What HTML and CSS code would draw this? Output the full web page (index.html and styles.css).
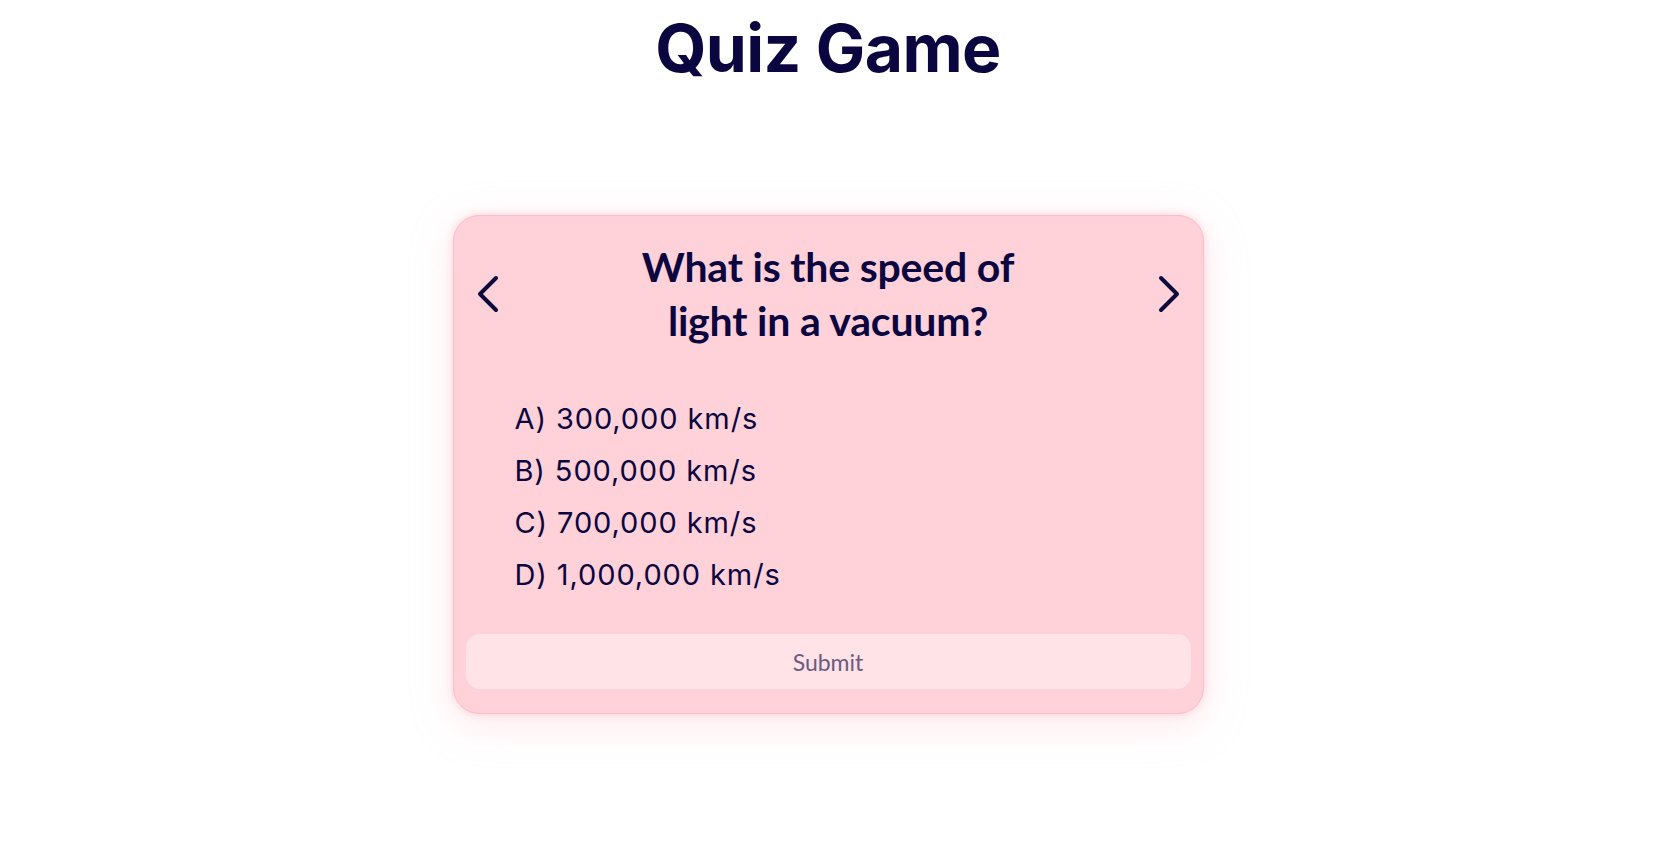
FILE: index.html
```html
<!DOCTYPE html>
<html lang="en">
<head>
<meta charset="utf-8">
<title>Quiz Game</title>
<link rel="stylesheet" href="styles.css">
</head>
<body>
  <h1 class="title">Quiz Game</h1>
  <main class="stage">
    <section class="card">
      <div class="card-head">
        <button class="nav-btn" aria-label="Previous question">
          <svg width="20" height="36" viewBox="0 0 20 36"><path d="M18 2 L2 18 L18 34" /></svg>
        </button>
        <h2 class="question">What is the speed of light in a vacuum?</h2>
        <button class="nav-btn" aria-label="Next question">
          <svg width="20" height="36" viewBox="0 0 20 36"><path d="M2 2 L18 18 L2 34" /></svg>
        </button>
      </div>
      <ul class="options">
        <li class="option"><span class="opt-key">A)</span><span class="opt-text">300,000 km/s</span></li>
        <li class="option"><span class="opt-key">B)</span><span class="opt-text">500,000 km/s</span></li>
        <li class="option"><span class="opt-key">C)</span><span class="opt-text">700,000 km/s</span></li>
        <li class="option"><span class="opt-key">D)</span><span class="opt-text">1,000,000 km/s</span></li>
      </ul>
      <button class="submit">Submit</button>
    </section>
  </main>
</body>
</html>
```
FILE: styles.css
```css
* { box-sizing: border-box; }

html { background: #ffffff; }

body {
  margin: 0;
  min-height: 860px;
  background: #ffffff;
  color: #0d0a3e;
  font-family: "Lato", "Noto Sans", sans-serif;
}

.title {
  margin: 8px 0 0;
  text-align: center;
  font-family: "Inter", "Noto Sans", sans-serif;
  font-weight: 700;
  font-size: 66px;
  line-height: 80px;
  letter-spacing: -0.6px;
  color: #0c0640;
}

.stage {
  display: flex;
  justify-content: center;
  padding: 127px 0 80px;
}

.card {
  width: 751px;
  background: #ffd1d9;
  border: 1px solid #ffbcc8;
  border-radius: 26px;
  padding: 24px 12px 24px;
  box-shadow: 0 0 10px rgba(255, 175, 190, 0.45), 0 10px 40px rgba(255, 190, 200, 0.35);
}

.card-head {
  display: flex;
  align-items: center;
  justify-content: space-between;
  padding: 0 12px 0 12px;
}

.nav-btn {
  border: 0;
  background: none;
  padding: 0;
  width: 20px;
  height: 36px;
  cursor: pointer;
  display: flex;
}

.nav-btn svg { overflow: visible; }
.nav-btn path {
  fill: none;
  stroke: #0d0a3e;
  stroke-width: 4;
  stroke-linecap: round;
  stroke-linejoin: round;
}

.question {
  margin: 0;
  max-width: 400px;
  text-align: center;
  font-family: "Lato", "Noto Sans", sans-serif;
  font-weight: 700;
  font-size: 41px;
  line-height: 54px;
  letter-spacing: -0.2px;
  color: #0c0640;
}

.options {
  list-style: none;
  margin: 45px 0 0;
  padding: 0 0 0 49px;
}

.option {
  display: flex;
  gap: 9px;
  font-family: "Inter", "Noto Sans", sans-serif;
  font-weight: 400;
  font-size: 29px;
  line-height: 52px;
  letter-spacing: 0.9px;
  color: #0c0640;
}

.submit {
  display: block;
  width: 100%;
  height: 55px;
  margin-top: 33px;
  border: 0;
  border-radius: 14px;
  background: #ffe3e7;
  color: #6d5a80;
  font-family: "Lato", "Noto Sans", sans-serif;
  font-size: 23px;
  cursor: pointer;
}
```
